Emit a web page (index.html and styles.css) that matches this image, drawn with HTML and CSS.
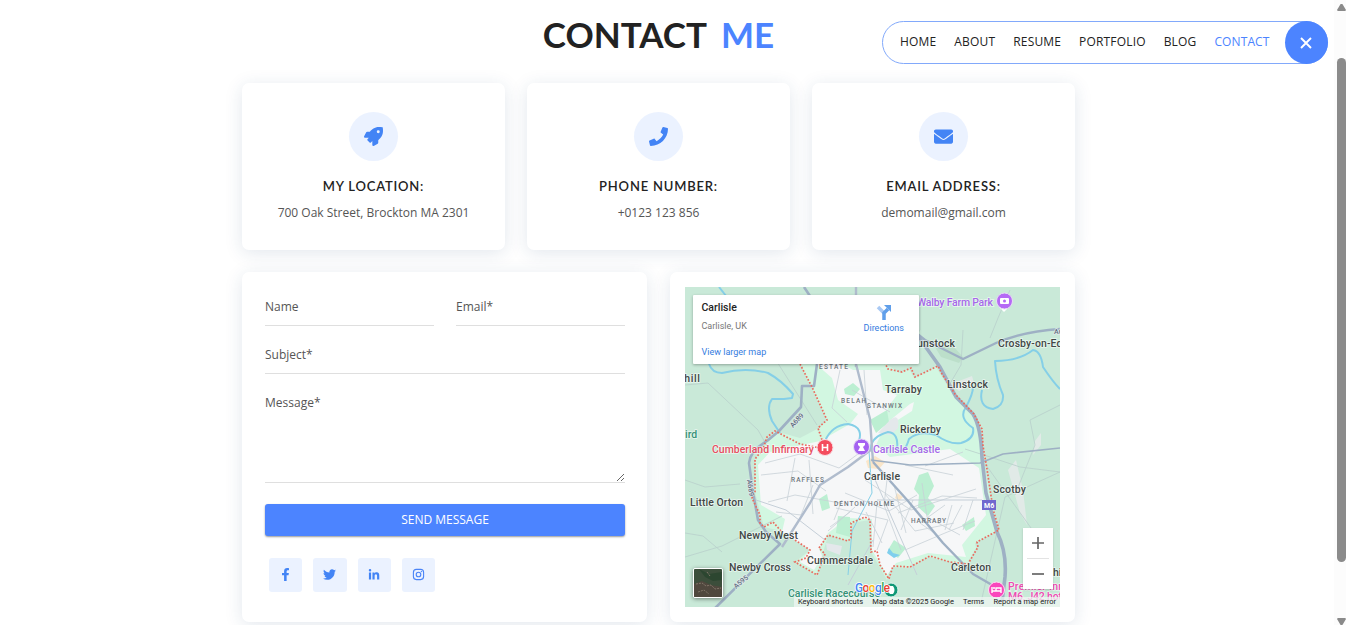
FILE: index.html
```html
<!DOCTYPE html>
<html lang="en">
<head>
<meta charset="utf-8">
<title>Contact Me</title>
<link rel="stylesheet" href="styles.css">
</head>
<body>
<nav class="menu">
  <div class="links"><a>HOME</a><a>ABOUT</a><a>RESUME</a><a>PORTFOLIO</a><a>BLOG</a><a class="active">CONTACT</a></div>
  <button class="close" aria-label="Close"><svg width="14" height="14" viewBox="0 0 14 14"><path d="M2 2l10 10M12 2L2 12" stroke="#fff" stroke-width="1.9" fill="none"/></svg></button>
</nav>
<main class="container">
  <h1 class="title"><span class="t1">CONTACT</span><span class="t2">ME</span></h1>
  <section class="info">
    <article class="card info-card">
      <div class="bubble"><svg width="19" height="19" viewBox="0 0 512 512"><path d="M505 12c-1-3-3-5-7-6C460 0 430 0 401 0 283 0 211 64 158 128H95c-16 0-35 12-42 26L3 251c-2 4-3 9-3 12 0 14 9 25 24 25h103c-6 14-20 26-31 38-10 10-10 25 0 35l55 55c10 10 25 10 35 0l38-37v109c0 13 11 24 25 24 3 0 8-1 11-3l98-49c14-7 26-26 26-42v-64c64-52 128-124 128-243 0-28 0-58-7-99zM384 168a40 40 0 1 1 0-80 40 40 0 0 1 0 80z"/></svg></div>
      <h2>MY LOCATION:</h2><p>700 Oak Street, Brockton MA 2301</p>
    </article>
    <article class="card info-card">
      <div class="bubble"><svg width="19" height="19" viewBox="0 0 512 512"><path d="M493 25L389 1c-11-3-23 3-27 14l-48 112c-4 10-1 22 7 28l61 50c-36 76-98 139-177 177l-50-61c-7-8-18-11-28-7L15 362c-11 4-17 16-14 27l24 104c3 11 12 19 24 19 256 0 463-207 463-463 0-12-8-21-19-24z"/></svg></div>
      <h2>PHONE NUMBER:</h2><p>+0123 123 856</p>
    </article>
    <article class="card info-card">
      <div class="bubble"><svg width="19" height="19" viewBox="0 0 512 512"><path d="M502 191c4-3 10 0 10 5v204c0 27-21 48-48 48H48c-27 0-48-21-48-48V196c0-5 6-8 10-5 22 17 52 40 155 114 21 15 57 48 91 48 34 0 71-33 91-48 103-74 133-97 155-114zM256 320c23 0 57-30 74-42 133-96 143-105 174-129 5-5 8-12 8-19v-18c0-27-21-48-48-48H48c-27 0-48 21-48 48v18c0 7 3 14 9 19 30 24 40 33 173 129 17 12 51 42 74 42z"/></svg></div>
      <h2>EMAIL ADDRESS:</h2><p>demomail@gmail.com</p>
    </article>
  </section>
  <section class="lower">
    <form class="card form">
      <div class="row"><input class="field" placeholder="Name"><input class="field" placeholder="Email*"></div>
      <input class="field" placeholder="Subject*">
      <textarea class="field area" placeholder="Message*"></textarea>
      <button class="send" type="button">SEND MESSAGE</button>
      <div class="social">
        <a><svg width="13" height="13" viewBox="0 0 320 512"><path d="M279 288l14-93h-89v-60c0-25 13-50 53-50h40V7s-37-7-72-7c-73 0-121 44-121 125v70H23v93h81v224h100V288z"/></svg></a>
        <a><svg width="13" height="13" viewBox="0 0 512 512"><path d="M459 152v14c0 138-105 298-298 298-59 0-114-17-161-47 8 1 16 1 25 1 49 0 94-16 130-44-46-1-85-31-98-73 16 3 32 3 48-1-48-10-84-53-84-104v-1c14 8 30 13 47 13-42-28-58-92-32-140 52 64 129 105 217 110-17-79 43-129 102-129 30 0 57 12 77 33 24-5 46-13 66-25-8 24-24 45-46 58 21-2 42-8 60-16-14 21-32 39-53 53z"/></svg></a>
        <a><svg width="12" height="12" viewBox="0 0 448 512"><path d="M100 448H7V149h93zM54 108a54 54 0 1 1 0-108 54 54 0 0 1 0 108zM448 448h-93V302c0-34-1-79-48-79-49 0-56 38-56 77v148h-93V149h89v41h1c13-24 43-48 88-48 94 0 112 62 112 142z"/></svg></a>
        <a><svg width="13" height="13" viewBox="0 0 13 13"><g fill="none" stroke="#4a84f7"><rect x="1.4" y="1.4" width="10.2" height="10.2" rx="3" stroke-width="1.1"/><circle cx="6.5" cy="6.500" r="2.300" stroke-width="1.1"/></g><circle cx="9.4" cy="3.6" r=".7"/></svg></a>
      </div>
    </form>
    <div class="card map-card">
      <div class="map">
        <svg class="canvas" width="375" height="320" viewBox="685 287 375 320">
          <rect x="685" y="287" width="375" height="320" fill="#c9e9d8"/>
          <path fill="#d2f7e1" d="M800 364H886L900 373 909 369 914 378 936 367 953 395 972 415 980 430 985 470 993 510 997 531 975 543 976 548 966 565 928 557 908 568 891 567 887 580 871 552 870 520 851 523 850 541 828 535 817 575 795 562 810 550 781 531 764 527 755 492 755 459 775 431 800 438 819 428 827 420z"/>
          <path fill="#f6f7f8" d="M816 364H842L853 370 880 370 883 390 897 395 888 407 884 428 876 445 890 457 950 449 979 468 986 515 962 545 966 557 928 553 896 563 887 575 872 550 872 519 848 518 828 533 819 549 822 556 814 570 800 562 810 550 782 532 785 519 761 505 758 465 770 452 820 441 850 424 858 414 838 400 832 378z"/>
          <g fill="#f6f7f8"><path d="M910 404L914 402 912 411 893 423 888 422z"/></g>
          <g fill="#e1eae7"><path d="M951 384l21-8 2 7-15 8zM1008 470l8-10 7 30 4 35-7-12zM1035 441l6-8v12l-8 10z"/></g>
          <g fill="#bcefd2"><path d="M844 389l9-6 7 6-6 7-9-2zM919 475l9-3 6 14-6 12 7 8-7 10-10-9 1-12-5-6zM819 499l8-5 3 14-8 3zM838 516l12 1v20l-14-4zM962 525l12-8 1 9-9 5zM870 420l17-10 2 12-13 11zM894 540l12 8-8 10-10-8z"/></g>
          <path fill="#bcdfca" d="M935 347l18-1 10 11-4 6-18-6z"/>
          <path fill="#e4e8eb" d="M826 543l16 3-2 9-13-5zM890 420q10-8 8 8l-7 7-13-2z"/>
          <path fill="#fae6c9" d="M866 461l9-5 10 6-6 7-11-1zM897 493l6 4-4 4-4-3z"/>
          <g fill="none" stroke="#c8d1d7" stroke-width=".8">
            <path stroke="#b9cfcb" d="M685 385l23-2 50 47 9 16M767 346l50 79M685 480l20 7 35-3M685 557l37-11 60-30M685 533l18 3 19 16M1060 472l-55 25-25 110M965 449l25 8 30 10 40 5M986 465l50 70M920 302v28l-18 25M963 330l-2 35-13 22M1010 290l-12 28-8 20M1060 405l-30 15 5 25-20 50"/>
            <path d="M765 463l35-9 39 14 23-17M761 475l37-4 28 20M768 502l27-7 45 8M776 512l25 3 12-30M795 458l-8 43M809 460l4 54M840 370l-8 38 15 14M864 370l3 45M852 390l38 22M836 508l52 12-11 30M845 493l44 18 28-16M865 480l46 30 65-21M885 494l30 37 39-8M898 513l44-17 35 2M905 465l48 10M925 466l38-14M905 550l40-17 30-12M922 483l5 34 33 18"/>
            <path d="M855 507l-27 24M850 512l-20 15M842 500l-8 20M866 512l16 31M877 503l-4 44M887 480l-3 25 17 45M894 485l12 48M913 500l-12 30M945 505l-25 18 17 12M952 505l-7 25M962 505l-13 25M973 500l-10 30"/>
          </g>
          <path d="M848 585L873 540M873 475l44 100M877 500h105M756 500l30 10 39 30" fill="none" stroke="#c5cfd8" stroke-width="1"/>
          <g fill="none" stroke="#85cfe7" stroke-width="2" stroke-linejoin="round">
            <path d="M719 287l11 14M709 364q3 9 13 9 24-6 46 0 13 7 25 21l-1 4-8 1-12 0q-6 8 0 22l8 12M825 441q7-16 23-17 18 3 9 22 8 11 14 2 0-11 17-16 11 1 9 17 7 7 12-10 10-9 27-4 14 10 25 8 14-4 12-15-15-10-7-21 7-13 7-20"/>
            <path d="M982 390q-4 17 11 19 11-3 10-14-7-16-8-34 24 0 38-11 8 1 10 17 10 15 17 22"/><path stroke-width="1" d="M869 451l3 42-20 38-4 44"/>
          </g>
          <path fill="#7fcfed" d="M889 548l4 5 7 2-6 3-7-5z"/>
          <g fill="none" stroke="#9eb0c4" stroke-linejoin="round">
            <path stroke-width="2.600" d="M804 287l8 12M817 364l-3 22-12 0-1 21-22 24-12 10q-17 10-18 22l4 29 5 28 8 12 14 12-76 75"/>
            <path stroke-width="2.400" stroke="#b0bccd" d="M782 547l28-44 10-18 28-18 24-18M856 287v80M856 364l14 55 3 43"/>
            <path stroke-width="2.400" d="M873 462l35 39 35 42 30 31 26 15M900 320l25 20 38 19 33-16q29-12 64-14"/>
            <path stroke-width="3.600" d="M910 325l30 42 16 30 17 17q8 13 9 44l4 35 11 39q10 20 8 45l-3 25"/>
            <path stroke-width="1.700" d="M871 460l39 5 70-2 23-9 57-6"/>
          </g>
          <path fill="none" stroke="#e96b5e" stroke-width="1.700" stroke-dasharray="1.7 1.7" d="M800 364l12 23 15 33-9 8 4 12M820 448l-20-4-25-13-8 6-4 12-8 10v33l-3 6 8 17v8l4 4 9-5 8 9M795 540l15 10-4 8-11 4 22 13 8-21-6-6 9-13 20 6 3-3v-15l14-6 5 3 1 32 6-1 3 14 9 14 4-13 17 1 20-11 20 6 18 2 10-17-1-5 22-12-6-21-6-40-4-23-1-17-8-15-19-20-13-20-4-8-23 11-4-9-9 4-14-3-3-6"/>
          <g class="labels">
            <text x="678" y="382" textLength="22">khill</text><text x="885" y="393" textLength="37">Tarraby</text><text x="947" y="388" textLength="41">Linstock</text><text x="998" y="347" textLength="76">Crosby-on-Eden</text><text x="917" y="347" textLength="38">unstock</text><text x="900" y="433" textLength="41">Rickerby</text><text x="864" y="480" textLength="36">Carlisle</text><text x="690" y="506" textLength="53">Little Orton</text><text x="739" y="539" textLength="59">Newby West</text><text x="729" y="571" textLength="62">Newby Cross</text><text x="807" y="564" textLength="66">Cummersdale</text><text x="993" y="493" textLength="33">Scotby</text><text x="951" y="571" textLength="40">Carleton</text><text x="1053" y="576">hill</text>
          </g>
          <g class="small"><text x="819" y="369" textLength="29">ESTATE</text><text x="841" y="403" textLength="25">BELAH</text><text x="867" y="408" textLength="35">STANWIX</text><text x="791" y="482" textLength="33">RAFFLES</text><text x="834" y="506" textLength="60">DENTON HOLME</text><text x="911" y="523" textLength="35">HARRABY</text></g>
          <g class="road"><text transform="translate(793 428) rotate(-48)">A689</text><text transform="translate(747 480) rotate(82)">A689</text><text transform="translate(736 589) rotate(-40)">A595</text><text x="1054" y="334">A6071</text></g>
          <rect x="982" y="500" width="14" height="10" fill="#7067ce"/><text x="984" y="508" fill="#fff" font-size="7" font-weight="700">M6</text>
          <g class="labels"><text class="purple" x="917" y="306" textLength="76">Walby Farm Park</text><text class="purple" x="873" y="453" textLength="67">Carlisle Castle</text><text class="red" x="712" y="453" textLength="102">Cumberland Infirmary</text><text class="green" x="685" y="438">ird</text><text class="green" x="788" y="597" textLength="92">Carlisle Racecourse</text><text class="pink" x="1008" y="590" textLength="56">Premier Inn</text><text class="pink" x="1008" y="600" textLength="62">M6, J42 hotel</text></g>
          <path d="M999 307l5 5 5-5" fill="#fff"/><circle cx="1004.500" cy="301" r="8" fill="#b569f5" stroke="#e8dff4"/><rect x="1000" y="298" width="9" height="6" rx="1" fill="#fff"/><circle cx="1004.500" cy="301" r="1.500" fill="#b569f5"/>
          <circle cx="825" cy="447.500" r="8" fill="#f44c5e" stroke="#f9dfe4"/><path d="M822.500 444v7m5-7v7m-5-3.500h5" stroke="#fff" stroke-width="1.600"/>
          <circle cx="861.500" cy="447" r="8" fill="#a462f1" stroke="#e8dff4"/><path d="M858 443h7v2l-2 2 2 4h-7l2-4-2-2z" fill="#fff"/>
          <circle cx="891" cy="590" r="7" fill="#109876" stroke="#def4ed"/><path d="M888 586h5q3 4 0 8h-3q-3-3-2-8" fill="#fff"/>
          <circle cx="996.500" cy="590" r="8" fill="#fa47bc" stroke="#fce1f2"/><path d="M992 587v6m0-2h9v2m0-2v-3h-5v3m-3-3h2" stroke="#fff" stroke-width="1.400" fill="none"/>
          <text class="google" x="855" y="592" textLength="35"><tspan fill="#4285f4">G</tspan><tspan fill="#ea4335">o</tspan><tspan fill="#fbbc05">o</tspan><tspan fill="#4285f4">g</tspan><tspan fill="#34a853">l</tspan><tspan fill="#ea4335">e</tspan></text>
        </svg>
        <div class="place">
          <div class="place-text"><strong>Carlisle</strong><span>Carlisle, UK</span><a>View larger map</a></div>
          <div class="directions"><svg width="16" height="16" viewBox="0 0 16 16"><path d="M2 3l6 6" stroke="#a9c9f4" stroke-width="3.500"/><path d="M8 16V9l4-4" stroke="#609fea" stroke-width="3.500" fill="none"/><path d="M8 1h7v7z" fill="#609fea"/></svg><a>Directions</a></div>
        </div>
        <div class="zoom"><span><svg width="14" height="14"><path d="M1 7h12M7 1v12" stroke="#666" stroke-width="1.700"/></svg></span><span><svg width="14" height="14"><path d="M1 7h12" stroke="#666" stroke-width="1.700"/></svg></span></div>
        <div class="satellite"><svg width="28" height="28" viewBox="0 0 28 28"><rect width="28" height="28" fill="#3c4e3b"/><path d="M0 15l8-3 9 4 11 2v10H0z" fill="#50483e"/><path d="M5 0l10 5 13-2v8l-9 1-8-4z" fill="#2c4630"/><path d="M2 15l6-1 4 3 5-1 4 4 6-1M13 3l3 4M4 23l6-2 5 4" stroke="#817568" stroke-width="1" fill="none" stroke-dasharray="2 1"/></svg></div>
        <div class="legal"><span>Keyboard shortcuts</span><span>Map data ©2025 Google</span><span>Terms</span><span>Report a map error</span></div>
      </div>
    </div>
  </section>
</main>
<div class="scrollbar"><i class="up"></i><i class="thumb"></i><i class="down"></i></div>
</body>
</html>
```
FILE: styles.css
```css
* { box-sizing: border-box; }
body { margin: 0; width: 1346px; height: 625px; overflow: hidden; position: relative; background: #fff; font-family: "Open Sans", sans-serif; font-size: 12px; color: #555; }
h1, h2, p { margin: 0; }
.container { width: 833px; margin-left: 242px; }
.title { height: 83px; padding-top: 13px; display: flex; justify-content: center; gap: 14px; font: 700 35px/42px Lato, sans-serif; color: #222; }
.t2 { color: #4c84ff; }
.menu { position: absolute; z-index: 5; left: 882px; top: 21px; width: 446px; height: 43px; border: 1px solid #82a9fb; border-radius: 22px; background: #fff; display: flex; justify-content: space-between; align-items: center; padding-left: 17px; }
.links { display: flex; gap: 18px; color: #222; line-height: 20px; letter-spacing: .17px; padding-bottom: 2px; }
.links .active { color: #4c84ff; font-weight: 500; letter-spacing: .1px; }
.close { width: 43px; height: 43px; flex: none; margin-right: -1px; border: 0; padding: 0 2px 0 0; border-radius: 50%; background: #4c84ff; display: grid; place-items: center; }
.card { background: #fff; border-radius: 7px; box-shadow: 0 3px 18px rgba(31, 66, 118, .13); }
.info { display: grid; grid-template-columns: repeat(3, 263px); gap: 22px; }
.info-card { height: 167px; padding-top: 29px; display: flex; flex-direction: column; align-items: center; }
.bubble { width: 49px; height: 49px; border-radius: 50%; background: #ebf2ff; display: grid; place-items: center; padding-bottom: 1px; }
svg { display: block; }
.bubble svg, .social svg { fill: #4384f5; }
.info h2 { margin-top: 16px; font: 600 13px/18px Lato, sans-serif; color: #222; letter-spacing: .8px; }
.info p { margin-top: 9px; line-height: 18px; }
.lower { margin-top: 22px; display: grid; grid-template-columns: 405px 405px; gap: 23px; }
.form { height: 350px; padding: 16px 22px 0 23px; display: flex; flex-direction: column; }
.row { display: flex; gap: 22px; }
.row .field { width: 0; flex: 1; }
.field { display: block; width: 100%; height: 38px; margin: 0 0 10px; padding: 0; border: 0; border-bottom: 1px solid #dfdfdf; outline: 0; background: transparent; font: 12px/18px "Open Sans", sans-serif; color: #555; }
.field::placeholder { color: #555; opacity: 1; }
.area { height: 99px; padding-top: 10px; margin-bottom: 21px; resize: vertical; }
.send { height: 32px; padding: 0 0 2px; border: 0; border-radius: 3px; background: #4c84ff; color: #fff; font: 12px "Open Sans", sans-serif; box-shadow: 0 1px 2px rgba(0, 0, 0, .4); }
.social { display: flex; gap: 11px; margin: 22px 0 0 4px; }
.social a { width: 33.300px; height: 34px; padding-bottom: 1px; border-radius: 3px; background: #ebf2ff; display: grid; place-items: center; }
.map-card { height: 350px; padding: 15px; }
.map { position: relative; width: 375px; height: 320px; overflow: hidden; font-family: Roboto, sans-serif; }
.labels { font: 500 10.500px Roboto, sans-serif; fill: #414746; paint-order: stroke; stroke: rgba(255, 255, 255, .6); stroke-width: 1.500px; }
.labels .purple { fill: #a568e9; }
.labels .red { fill: #e74e61; }
.labels .green { fill: #359176; }
.labels .pink { fill: #ee49b2; }
.small { font: 500 6.500px Roboto, sans-serif; fill: #6d757b; }
.road { font: 500 7px Roboto, sans-serif; fill: #5f6e81; paint-order: stroke; stroke: #dfe9e9; stroke-width: 1.500px; }
.google { font: 500 12px Roboto, sans-serif; paint-order: stroke; stroke: #fff; stroke-width: 1.500px; }
.place { position: absolute; left: 8px; top: 8px; width: 226px; height: 69px; border-radius: 1px; background: #fff; box-shadow: 0 1px 3px rgba(0, 0, 0, .3); display: flex; justify-content: space-between; padding: 7px 15px 0 8.500px; font-size: 9px; line-height: 12px; }
.place-text { display: flex; flex-direction: column; color: #777; }
.place-text strong { font-size: 10.500px; font-weight: 500; color: #222; margin-bottom: 6px; }
.place a { color: #347ce0; white-space: nowrap; }
.place-text a { margin-top: 14px; }
.directions { display: flex; flex-direction: column; align-items: center; padding-top: 2px; }
.directions a { margin-top: 2px; }
.zoom { position: absolute; left: 338px; top: 241px; width: 30px; height: 61px; background: #fff; box-shadow: 0 1px 2px rgba(0, 0, 0, .18); display: flex; flex-direction: column; padding: 0 4px; }
.zoom span { flex: 1; display: grid; place-items: center; }
.zoom span + span { border-top: 1px solid #e3e3e3; }
.satellite { position: absolute; left: 8px; top: 281px; border: 1px solid #fff; border-radius: 2px; box-shadow: 0 1px 4px rgba(0, 0, 0, .45); overflow: hidden; }
.legal { position: absolute; right: 0; bottom: 0; height: 10px; width: 266px; display: flex; justify-content: space-between; padding: 0 4px; background: rgba(239, 246, 243, .75); color: #222; font-size: 7.500px; line-height: 10px; white-space: nowrap; }
.scrollbar { position: absolute; right: 0; top: 0; width: 12px; height: 625px; background: #fcfcfc; display: flex; flex-direction: column; align-items: flex-end; padding-top: 4px; }
.scrollbar i { flex: none; }
.up, .down { width: 9px; height: 7px; background: #8a8a8a; clip-path: polygon(40% 0, 60% 0, 100% 85%, 92% 100%, 8% 100%, 0 85%); }
.thumb { width: 9px; height: 504px; margin-top: 47px; background: #8b8b8b; border-radius: 5px; }
.down { margin-top: 56px; transform: rotate(180deg); }
```
